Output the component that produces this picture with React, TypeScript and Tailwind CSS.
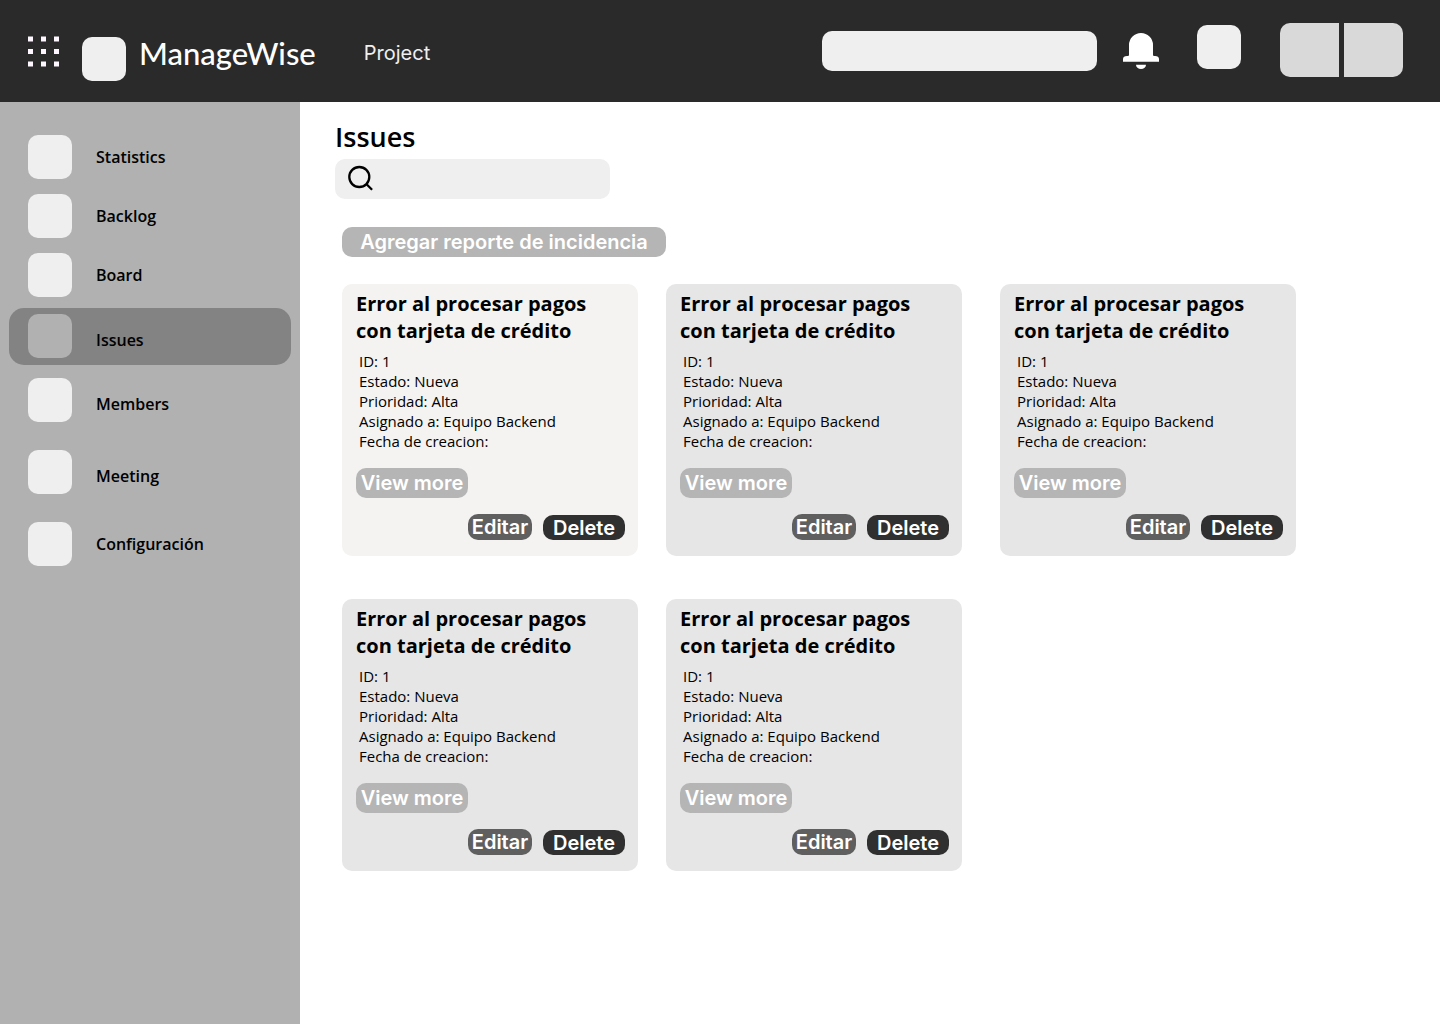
import React from "react";

type NavItem = { label: string; row: string; low?: boolean; active?: boolean };

const navItems: NavItem[] = [
  { label: "Statistics", row: "h-[58px]" },
  { label: "Backlog", row: "h-[60px]" },
  { label: "Board", row: "h-[58px]" },
  { label: "Issues", row: "mt-1 h-[57px] pb-px", low: true, active: true },
  { label: "Members", row: "h-[70px]", low: true },
  { label: "Meeting", row: "h-[74px]", low: true },
  { label: "Configuración", row: "h-[70px]" },
];

const issues = [1, 2, 3, 4, 5].map((key) => ({
  key,
  title: "Error al procesar pagos con tarjeta de crédito",
  details: ["ID: 1", "Estado: Nueva", "Prioridad: Alta", "Asignado a: Equipo Backend", "Fecha de creacion:"],
}));

function Header() {
  return (
    <header className="flex h-[102px] items-start bg-[#2a2a2a] pr-[37px] pl-7 text-white">
      <button type="button" aria-label="Apps" className="mt-9">
        <svg width="32" height="32" viewBox="0 0 32 32" fill="#fef7ff">
          {[0.5, 13, 25.5].map((y) =>
            [0, 13, 26].map((x) => <rect key={`${x}-${y}`} x={x} y={y} width="5" height="5" />)
          )}
        </svg>
      </button>
      <div className="mt-[37px] ml-[22px] size-11 rounded-[10px] bg-[#efefef]" />
      <span className="mt-8 ml-[13px] font-['Lato',sans-serif] text-[31px] leading-[42px] font-medium">ManageWise</span>
      <a href="#project" className="mt-10 ml-12 font-['Inter',sans-serif] text-xl leading-[26px] text-[#efefef]">
        Project
      </a>
      <input
        type="text"
        aria-label="Search"
        className="mt-[31px] ml-auto h-10 w-[275px] rounded-[10px] bg-[#efefef] px-3 text-black outline-none"
      />
      <button type="button" aria-label="Notifications" className="mt-[33px] ml-[26px]">
        <svg width="36" height="36" viewBox="0 0 36 36" fill="white">
          <path d="M6 12a12 12 0 0 1 24 0v9.500c0 1 .5 1.500 1.500 1.500h.5c2.500 0 4 1.200 4 3v2.800H0V26c0-1.800 1.500-3 4-3h.5c1 0 1.500-.5 1.500-1.500z" />
          <path d="M13 31.700h10a5 4.300 0 0 1-10 0z" />
        </svg>
      </button>
      <button type="button" aria-label="Profile" className="mt-[25px] ml-[38px] size-11 rounded-[10px] bg-[#efefef]" />
      <div className="mt-[23px] ml-[39px] flex gap-[5px]">
        <button type="button" aria-label="First option" className="h-[54px] w-[59px] rounded-l-[10px] bg-[#d9d9d9]" />
        <button type="button" aria-label="Second option" className="h-[54px] w-[59px] rounded-r-[10px] bg-[#d9d9d9]" />
      </div>
    </header>
  );
}

function Sidebar() {
  return (
    <nav className="flex w-[300px] shrink-0 flex-col bg-[#b1b1b1] px-[9px] pt-[26px]">
      {navItems.map((item) => (
        <a
          key={item.label}
          href={`#${item.label.toLowerCase()}`}
          className={`flex items-center gap-6 rounded-[15px] pl-[19px] text-base font-semibold ${item.row} ${item.active ? "bg-[#838383]" : ""}`}
        >
          <span className={`size-11 rounded-[10px] ${item.active ? "bg-[#b1b1b1]" : "bg-[#efefef]"}`} />
          <span className={item.low ? "pt-2" : ""}>{item.label}</span>
        </a>
      ))}
    </nav>
  );
}

function IssueCard({ title, details, highlighted }: { title: string; details: string[]; highlighted: boolean }) {
  return (
    <article
      className={`w-[296px] rounded-[10px] pt-[6px] pr-[13px] pb-4 pl-[14px] ${highlighted ? "bg-[#f4f3f1]" : "bg-[#e6e6e6]"}`}
    >
      <h2 className="text-xl leading-[27px] font-bold">{title}</h2>
      <ul className="mt-[7px] pl-[3px] text-[15px] leading-5">
        {details.map((line) => (
          <li key={line}>{line}</li>
        ))}
      </ul>
      <button
        type="button"
        className="mt-[17px] block h-[30px] w-28 rounded-[10px] bg-[#b5b5b5] font-['Inter',sans-serif] text-xl leading-[30px] font-semibold whitespace-nowrap text-white"
      >
        View more
      </button>
      <div className="mt-4 flex items-end justify-end gap-[11px] font-['Inter',sans-serif] text-xl font-semibold text-white">
        <button type="button" className="flex h-[26px] w-16 items-center justify-center rounded-[10px] bg-[#5f5f5f]">
          Editar
        </button>
        <button type="button" className="flex h-[25px] w-[82px] items-center justify-center rounded-[10px] bg-[#303030]">
          Delete
        </button>
      </div>
    </article>
  );
}

export default function App() {
  return (
    <div className="flex min-h-screen flex-col bg-white font-['Open_Sans',sans-serif] text-black">
      <Header />
      <div className="flex flex-1">
        <Sidebar />
        <main className="min-w-0 flex-1 px-[35px] pt-4">
          <h1 className="text-[27px] leading-[38px] font-semibold">Issues</h1>
          <label className="mt-[3px] flex h-10 w-[275px] items-center rounded-[10px] bg-[#efefef] px-3">
            <svg width="28" height="28" viewBox="0 0 28 28" fill="none" stroke="black" strokeWidth="2.3">
              <circle cx="12.300" cy="12" r="10" />
              <path d="M19.300 19l5.800 5.800" />
            </svg>
            <input type="search" aria-label="Search issues" className="ml-2 min-w-0 flex-1 bg-transparent outline-none" />
          </label>
          <div className="pl-[7px]">
            <button
              type="button"
              className="mt-7 block h-[30px] w-[324px] rounded-[10px] bg-[#b5b5b5] font-['Inter',sans-serif] text-xl leading-[30px] font-semibold whitespace-nowrap text-white"
            >
              Agregar reporte de incidencia
            </button>
            <section className="mt-[27px] grid gap-y-[43px] lg:grid-cols-[324px_296px] xl:grid-cols-[324px_334px_296px]">
              {issues.map((issue, index) => (
                <IssueCard key={issue.key} title={issue.title} details={issue.details} highlighted={index === 0} />
              ))}
            </section>
          </div>
        </main>
      </div>
    </div>
  );
}
